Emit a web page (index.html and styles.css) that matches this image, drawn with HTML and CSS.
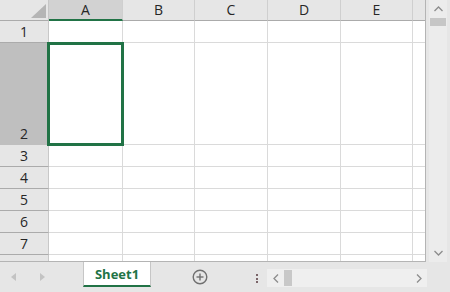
FILE: index.html
```html
<!DOCTYPE html>
<html lang="en">
<head>
    <meta charset="UTF-8">
    <title>Book1 - Sheet1</title>
    <link rel="stylesheet" href="styles.css">
</head>
<body>

<div class="workbook">
    <div class="top">
        <div class="sheet">
            <!-- header row -->
            <div class="corner">
                <svg width="15" height="14" viewBox="0 0 15 14"><polygon points="15,0 15,14 0,14" fill="#b5b5b5"/></svg>
            </div>
            <div class="colhead selected">A</div>
            <div class="colhead">B</div>
            <div class="colhead">C</div>
            <div class="colhead">D</div>
            <div class="colhead">E</div>
            <div class="colhead last"></div>

            <div class="rowhead">1</div>
            <div class="cell"></div><div class="cell"></div><div class="cell"></div><div class="cell"></div><div class="cell"></div><div class="cell last"></div>

            <div class="rowhead selected">2</div>
            <div class="cell active"></div><div class="cell"></div><div class="cell"></div><div class="cell"></div><div class="cell"></div><div class="cell last"></div>

            <div class="rowhead">3</div>
            <div class="cell"></div><div class="cell"></div><div class="cell"></div><div class="cell"></div><div class="cell"></div><div class="cell last"></div>

            <div class="rowhead">4</div>
            <div class="cell"></div><div class="cell"></div><div class="cell"></div><div class="cell"></div><div class="cell"></div><div class="cell last"></div>

            <div class="rowhead">5</div>
            <div class="cell"></div><div class="cell"></div><div class="cell"></div><div class="cell"></div><div class="cell"></div><div class="cell last"></div>

            <div class="rowhead">6</div>
            <div class="cell"></div><div class="cell"></div><div class="cell"></div><div class="cell"></div><div class="cell"></div><div class="cell last"></div>

            <div class="rowhead">7</div>
            <div class="cell"></div><div class="cell"></div><div class="cell"></div><div class="cell"></div><div class="cell"></div><div class="cell last"></div>

            <div class="rowhead bottom"></div>
            <div class="cell bottom"></div><div class="cell bottom"></div><div class="cell bottom"></div><div class="cell bottom"></div><div class="cell bottom"></div><div class="cell bottom last"></div>
        </div>

        <div class="vscroll">
            <div class="sbtn">
                <svg width="9" height="6" viewBox="0 0 9 6"><polyline points="0.5,5 4.5,1 8.5,5" fill="none" stroke="#8c8c8c" stroke-width="1.3"/></svg>
            </div>
            <div class="vthumb"></div>
            <div class="vtrack"></div>
            <div class="sbtn">
                <svg width="9" height="6" viewBox="0 0 9 6"><polyline points="0.5,1 4.5,5 8.5,1" fill="none" stroke="#8c8c8c" stroke-width="1.3"/></svg>
            </div>
        </div>
    </div>

    <div class="tabbar">
        <div class="tabnav">
            <svg width="5" height="8" viewBox="0 0 5 8"><polygon points="5,0 5,8 0,4" fill="#c3c3c3"/></svg>
            <svg width="5" height="8" viewBox="0 0 5 8"><polygon points="0,0 0,8 5,4" fill="#c3c3c3"/></svg>
        </div>
        <div class="tab">Sheet1</div>
        <div class="addsheet">
            <svg width="16" height="16" viewBox="0 0 16 16">
                <circle cx="8" cy="8" r="6.8" fill="none" stroke="#707070" stroke-width="1.4"/>
                <line x1="8" y1="4.5" x2="8" y2="11.5" stroke="#707070" stroke-width="1.4"/>
                <line x1="4.5" y1="8" x2="11.5" y2="8" stroke="#707070" stroke-width="1.4"/>
            </svg>
        </div>
        <div class="splitter">
            <span></span><span></span><span></span>
        </div>
        <div class="hscroll">
            <div class="sbtn">
                <svg width="6" height="9" viewBox="0 0 6 9"><polyline points="5,0.5 1,4.5 5,8.5" fill="none" stroke="#8c8c8c" stroke-width="1.3"/></svg>
            </div>
            <div class="hthumb"></div>
            <div class="htrack"></div>
            <div class="sbtn">
                <svg width="6" height="9" viewBox="0 0 6 9"><polyline points="1,0.5 5,4.5 1,8.5" fill="none" stroke="#8c8c8c" stroke-width="1.3"/></svg>
            </div>
        </div>
    </div>
</div>

</body>
</html>
```

FILE: styles.css
```css
body {
    margin: 0;
    background-color: #e6e6e6;
    font-family: 'Open Sans', 'Noto Sans', sans-serif;
    color: #262626;
}
.workbook {
    width: 450px;
    height: 292px;
    overflow: hidden;
}
.top {
    display: flex;
    height: 262px;
}

/* grid */
.sheet {
    display: grid;
    grid-template-columns: 49px 74px 72px 73px 73px 72px 12px;
    grid-template-rows: 21px 22px 102px 22px 22px 22px 22px 22px 6px;
    width: 426px;
    height: 262px;
    box-sizing: border-box;
    border-right: 1px solid #b4b4b4;
    border-bottom: 1px solid #b4b4b4;
    background-color: #fff;
}
.sheet > div {
    box-sizing: border-box;
}
.cell {
    border-right: 1px solid #dadada;
    border-bottom: 1px solid #dadada;
}
.cell.last {
    border-right: none;
}
.cell.bottom {
    border-bottom: none;
}
.cell.active {
    position: relative;
}
.cell.active::after {
    content: "";
    position: absolute;
    top: -1px;
    left: -2px;
    right: -2px;
    bottom: -2px;
    border: 3px solid #217346;
}
.corner {
    background-color: #e6e6e6;
    border-right: 1px solid #c6c6c6;
    border-bottom: 1px solid #ababab;
    display: flex;
    justify-content: flex-end;
    align-items: flex-end;
    padding: 0 2px 2px 0;
}
.colhead {
    background-color: #e6e6e6;
    border-right: 1px solid #cfcfcf;
    border-bottom: 1px solid #ababab;
    font-size: 14px;
    line-height: 20px;
    text-align: center;
}
.colhead.selected {
    background-color: #d2d2d2;
    border-bottom: 2px solid #217346;
}
.colhead.last {
    border-right: none;
}
.rowhead {
    background-color: #e6e6e6;
    border-right: 1px solid #c8c8c8;
    border-bottom: 1px solid #ababab;
    font-size: 14px;
    line-height: 18px;
    display: flex;
    justify-content: center;
    align-items: flex-end;
    padding-bottom: 1px;
}
.rowhead.selected {
    background-color: #bfbfbf;
    border-bottom-color: #bfbfbf;
}
.rowhead.bottom {
    border-bottom: none;
}

/* scroll bars */
.vscroll {
    display: flex;
    flex-direction: column;
    width: 18px;
    margin-left: 3px;
    background-color: #ececec;
}
.vscroll .sbtn {
    height: 18px;
    display: flex;
    justify-content: center;
    align-items: center;
}
.vthumb {
    height: 8px;
    margin: 0 1px;
    background-color: #c6c6c6;
}
.vtrack {
    flex: 1;
}

.tabbar {
    display: flex;
    align-items: flex-start;
    height: 30px;
}
.tabnav {
    width: 83px;
    height: 30px;
    display: flex;
    align-items: center;
    gap: 24px;
    padding-left: 11px;
    box-sizing: border-box;
}
.tab {
    width: 68px;
    height: 25px;
    box-sizing: border-box;
    background-color: #fff;
    border-left: 1px solid #c6c6c6;
    border-right: 1px solid #c6c6c6;
    border-bottom: 2px solid #217346;
    color: #217346;
    font-weight: bold;
    font-size: 13px;
    display: flex;
    justify-content: center;
    align-items: center;
    padding-top: 1px;
}
.addsheet {
    width: 96px;
    height: 30px;
    display: flex;
    justify-content: center;
    align-items: center;
    padding-left: 1px;
    box-sizing: border-box;
}
.splitter {
    width: 20px;
    height: 30px;
    display: flex;
    flex-direction: column;
    justify-content: center;
    align-items: center;
    gap: 1.5px;
    padding-top: 3px;
    box-sizing: border-box;
}
.splitter span {
    width: 2px;
    height: 2px;
    background-color: #7a6468;
}
.hscroll {
    display: flex;
    width: 160px;
    height: 18px;
    margin-top: 7px;
    background-color: #efefef;
}
.hscroll .sbtn {
    width: 17px;
    display: flex;
    justify-content: center;
    align-items: center;
}
.hthumb {
    width: 8px;
    margin: 1px 0;
    background-color: #c8c8c8;
}
.htrack {
    flex: 1;
}
```
